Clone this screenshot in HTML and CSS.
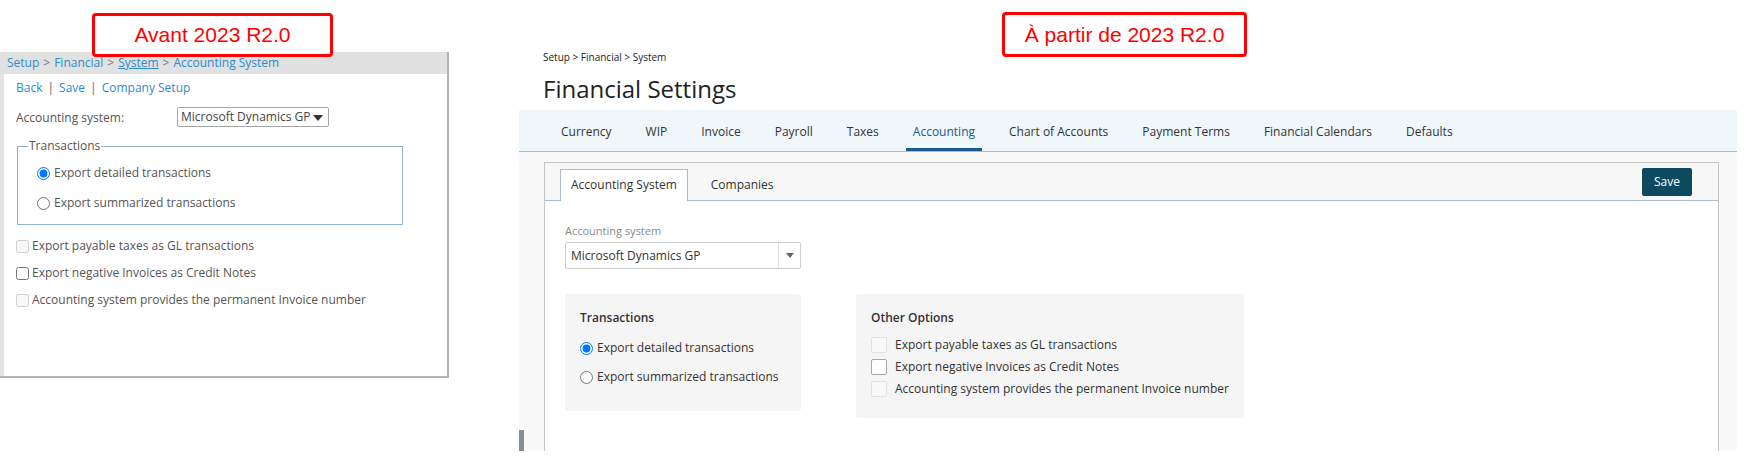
FILE: index.html
```html
<!DOCTYPE html>
<html lang="fr">
<head>
    <meta charset="UTF-8">
    <meta name="viewport" content="width=device-width, initial-scale=1.0">
    <title>Accounting System - avant / après 2023 R2.0</title>
    <link rel="stylesheet" href="styles.css">
</head>
<body>
    <div class="page">
        <!-- old screen -->
        <section class="old">
            <div class="callout callout-old">Avant 2023 R2.0</div>
            <div class="old-frame">
                <div class="old-crumbs">
                    <a>Setup</a><span class="sep">&gt;</span><a>Financial</a><span class="sep">&gt;</span><a class="u">System</a><span class="sep">&gt;</span><a>Accounting System</a>
                </div>
                <div class="old-body">
                    <div class="old-links">
                        <a>Back</a><span class="pipe">|</span><a>Save</a><span class="pipe">|</span><a>Company Setup</a>
                    </div>
                    <div class="old-field">
                        <span class="old-label">Accounting system:</span>
                        <div class="old-select">Microsoft Dynamics GP<span class="old-caret"></span></div>
                    </div>
                    <fieldset class="old-set">
                        <legend>Transactions</legend>
                        <label class="old-opt"><input type="radio" name="old-tx" checked><span>Export detailed transactions</span></label>
                        <label class="old-opt"><input type="radio" name="old-tx"><span>Export summarized transactions</span></label>
                    </fieldset>
                    <label class="old-check"><input type="checkbox" disabled><span>Export payable taxes as GL transactions</span></label>
                    <label class="old-check"><input type="checkbox"><span>Export negative Invoices as Credit Notes</span></label>
                    <label class="old-check"><input type="checkbox" disabled><span>Accounting system provides the permanent Invoice number</span></label>
                </div>
            </div>
        </section>

        <!-- new screen -->
        <section class="new">
            <div class="callout callout-new">À partir de 2023 R2.0</div>
            <div class="new-head">
                <div class="new-crumbs">Setup &gt; Financial &gt; System</div>
                <h1 class="new-title">Financial Settings</h1>
            </div>
            <div class="new-screen">
                <nav class="nav-tabs">
                    <span class="nav-tab">Currency</span>
                    <span class="nav-tab">WIP</span>
                    <span class="nav-tab">Invoice</span>
                    <span class="nav-tab">Payroll</span>
                    <span class="nav-tab">Taxes</span>
                    <span class="nav-tab active">Accounting</span>
                    <span class="nav-tab">Chart of Accounts</span>
                    <span class="nav-tab">Payment Terms</span>
                    <span class="nav-tab">Financial Calendars</span>
                    <span class="nav-tab">Defaults</span>
                </nav>
                <div class="work">
                    <div class="gutter"><span class="scroll-thumb"></span></div>
                    <div class="panel">
                        <div class="panel-head">
                            <span class="sub-tab active">Accounting System</span>
                            <span class="sub-tab">Companies</span>
                            <button class="btn-save">Save</button>
                        </div>
                        <div class="panel-body">
                            <div class="field-label">Accounting system</div>
                            <div class="select">
                                <span class="select-text">Microsoft Dynamics GP</span>
                                <span class="select-btn"><svg width="8" height="5" viewBox="0 0 8 5"><path d="M0 0h8L4 5z" fill="#666"/></svg></span>
                            </div>
                            <div class="groups">
                                <div class="group group-trans">
                                    <div class="group-title">Transactions</div>
                                    <label class="opt"><input type="radio" name="new-tx" checked><span>Export detailed transactions</span></label>
                                    <label class="opt"><input type="radio" name="new-tx"><span>Export summarized transactions</span></label>
                                </div>
                                <div class="group group-other">
                                    <div class="group-title">Other Options</div>
                                    <label class="chk"><input type="checkbox" disabled><span>Export payable taxes as GL transactions</span></label>
                                    <label class="chk"><input type="checkbox"><span>Export negative Invoices as Credit Notes</span></label>
                                    <label class="chk"><input type="checkbox" disabled><span>Accounting system provides the permanent Invoice number</span></label>
                                </div>
                            </div>
                        </div>
                    </div>
                    <div class="gutter-right"></div>
                </div>
            </div>
        </section>
    </div>
</body>
</html>
```

FILE: styles.css
```css
body { margin: 0; width: 1750px; height: 463px; overflow: hidden; background: #fff; font-family: "Open Sans", "Noto Sans", sans-serif; font-size: 12px; color: #333; }
.page { display: flex; align-items: flex-start; }

/* red labels drawn over the screenshots */
.callout { position: absolute; box-sizing: border-box; border: 3px solid #ff0000; border-radius: 4px; background: #fff; color: #ff0000; font-family: "Liberation Sans", Arial, sans-serif; font-size: 21px; text-align: center; z-index: 2; }
.callout-old { left: 92px; top: 13px; width: 241px; height: 44px; line-height: 38px; }
.callout-new { left: 483px; top: 12px; width: 245px; height: 45px; line-height: 39px; }

/* old screen */
.old { position: relative; flex: none; width: 449px; padding-top: 52px; }
.old-frame { box-sizing: border-box; height: 326px; border-right: 2px solid #b4b4b4; border-bottom: 2px solid #b4b4b4; display: flex; flex-direction: column; }
.old-crumbs { height: 22px; line-height: 22px; padding-left: 7px; background: #e1e1e1; color: #2e8cc8; }
.old-crumbs a, .old-links a { color: #2e8cc8; }
.old-crumbs .u { text-decoration: underline; }
.old-crumbs .sep { color: #777; margin: 0 4px; }
.old-body { flex: 1; border-left: 4px solid #e3e3e3; padding: 5px 0 0 12px; color: #555; }
.old-links { line-height: 18px; }
.old-links .pipe { color: #666; margin: 0 5px; }
.old-field { display: flex; align-items: center; margin-top: 10px; height: 20px; }
.old-label { width: 161px; }
.old-select { position: relative; box-sizing: border-box; width: 152px; height: 20px; line-height: 18px; border: 1px solid #a6a6a6; border-radius: 2px; padding-left: 3px; color: #444; }
.old-caret { position: absolute; right: 5px; top: 7px; border-left: 5px solid transparent; border-right: 5px solid transparent; border-top: 6px solid #333; }
.old-set { box-sizing: border-box; width: 386px; margin: 10px 0 0 1px; padding: 8px 19px 11px; border: 1px solid #8db4d3; }
.old-set legend { padding: 0 1px; margin-left: -9px; line-height: 18px; }
.old-opt, .old-check { display: flex; align-items: center; line-height: 20px; }
.old-opt + .old-opt { margin-top: 10px; }
.old-opt input { width: 13px; height: 13px; margin: 0 4px 0 0; }
.old-check { margin-top: 7px; }
.old-set + .old-check { margin-top: 11px; }
.old-check input { width: 13px; height: 13px; margin: 0 3px 0 0; }

/* new screen */
.new { position: relative; flex: none; width: 1218px; margin-left: 70px; }
.new-head { padding: 51px 0 0 24px; color: #222; }
.new-crumbs { font-size: 10px; line-height: 12px; }
.new-title { margin: 10px 0 5px; font-size: 24px; line-height: 32px; font-weight: 400; }
.new-screen { height: 341px; background: #f9f9f9; display: flex; flex-direction: column; }
.nav-tabs { display: flex; gap: 20px; height: 41px; padding-left: 35px; background: #f0f7fb; border-bottom: 1px solid #a9bccf; }
.nav-tab { padding: 2px 7px 0; line-height: 39px; color: #333; }
.nav-tab.active { color: #1b5a8e; box-shadow: inset 0 -3px 0 #1b5a8e; }
.work { flex: 1; display: flex; padding-top: 10px; }
.gutter { width: 25px; display: flex; flex-direction: column; justify-content: flex-end; }
.scroll-thumb { width: 5px; height: 21px; background: #858d95; }
.gutter-right { width: 18px; }
.panel { flex: 1; display: flex; flex-direction: column; background: #fff; border: 1px solid #c4c4c4; border-bottom: none; }
.panel-head { display: flex; align-items: flex-end; height: 37px; padding: 0 26px 0 15px; background: #f7f7f7; border-bottom: 1px solid #a9bccf; }
.sub-tab { box-sizing: border-box; height: 32px; margin-bottom: -1px; padding: 0 10px; line-height: 30px; border: 1px solid transparent; border-bottom: none; color: #333; }
.sub-tab.active { background: #fff; border-color: #a9bccf; }
.sub-tab + .sub-tab { margin-left: 12px; }
.btn-save { margin-left: auto; align-self: center; width: 50px; height: 28px; padding: 0; border: none; border-radius: 2px; background: #0e4a5f; color: #fff; font-family: inherit; font-size: 12px; }
.panel-body { flex: 1; padding: 22px 20px 0; }
.field-label { font-size: 11px; line-height: 16px; color: #8a8a8a; }
.select { box-sizing: border-box; display: flex; width: 236px; height: 27px; margin-top: 3px; border: 1px solid #cdcdcd; border-radius: 2px; }
.select-text { flex: 1; padding-left: 5px; line-height: 25px; }
.select-btn { width: 21px; border-left: 1px solid #dcdcdc; display: flex; align-items: center; justify-content: center; }
.groups { display: flex; align-items: flex-start; gap: 55px; margin-top: 25px; }
.group { box-sizing: border-box; background: #f5f5f5; border-radius: 3px; padding: 15px 15px 18px; }
.group-trans { width: 236px; padding-bottom: 24px; }
.group-other { width: 388px; }
.group-title { line-height: 18px; font-weight: 600; }
.opt { display: flex; align-items: center; line-height: 20px; margin-top: 9px; }
.group-title + .opt { margin-top: 11px; }
.opt input { width: 13px; height: 13px; margin: 0 4px 0 0; }
.chk { display: flex; align-items: center; line-height: 22px; }
.group-title + .chk { margin-top: 7px; }
.chk input { appearance: none; box-sizing: border-box; width: 16px; height: 16px; margin: 0 8px 0 0; border: 1px solid #a8a8a8; border-radius: 2px; background: #fff; }
.chk input:disabled { border-color: #e2e2e2; background: #f8f8f8; }
```
